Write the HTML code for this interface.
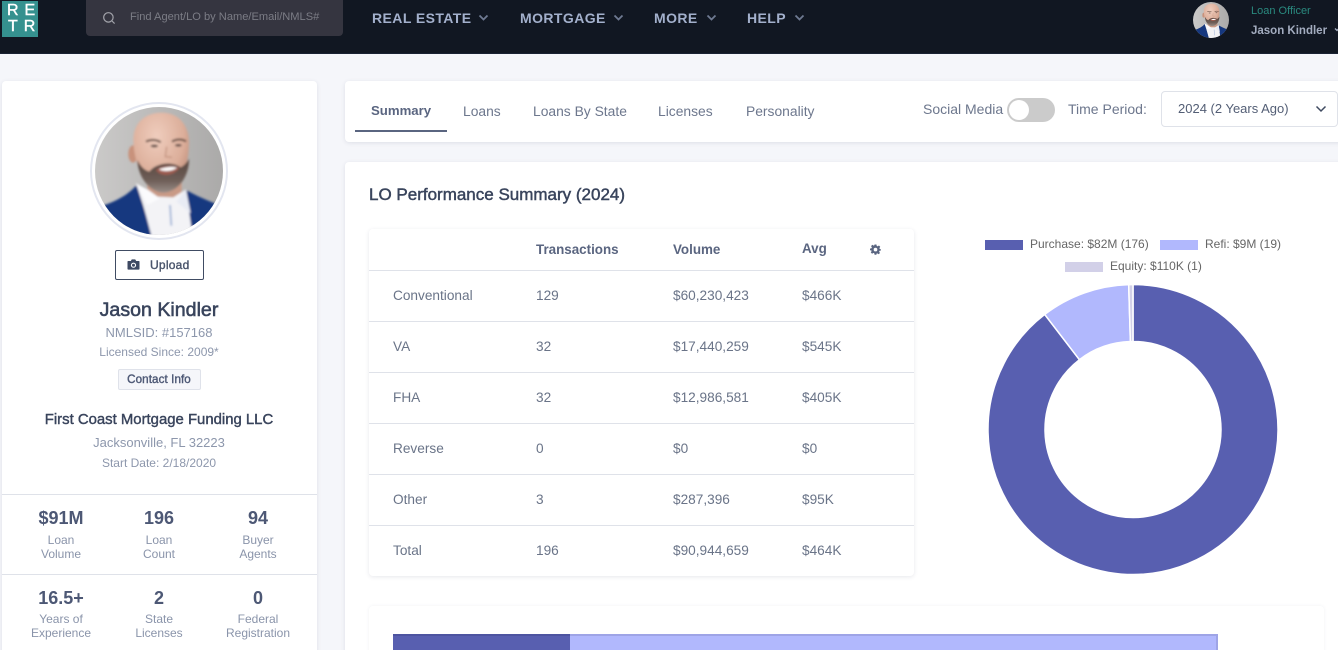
<!DOCTYPE html>
<html lang="en"><head><meta charset="utf-8"><title>Jason Kindler</title>
<style>
*{box-sizing:border-box;margin:0;padding:0}
html,body{width:1338px;height:650px;overflow:hidden;background:#f5f6fa}
body{position:relative;font-family:"Liberation Sans",Arial,sans-serif;color:#6b7791}
.a{position:absolute}
.t{position:absolute;white-space:nowrap;line-height:20px;font-size:14px}
.c{transform:translateX(-50%)}
.card{position:absolute;background:#fff;border-radius:4px;box-shadow:0 1px 4px rgba(70,80,110,.13)}
.nav{font-weight:bold;color:#a3b0cc;font-size:14px;letter-spacing:.42px}
.m{-webkit-text-stroke:.4px currentColor}
.hd{font-weight:bold;color:#5a6580;font-size:13.4px}
.cell{color:#6a7488;font-size:13.65px}
.ln{position:absolute;left:0;width:545px;height:1px;background:#dfe2e9}
.big{font-weight:bold;font-size:18px;color:#4d5875}
.sm{font-size:12px;color:#8a94aa;line-height:14px;text-align:center;white-space:nowrap;position:absolute;transform:translateX(-50%)}
.tab{color:#6d778d;font-size:13.85px}
.tb2{color:#6d778d;font-size:14px}
.leg{font-size:12px;color:#666}
</style></head><body>

<!-- top bar -->
<div class="a" style="left:0;top:0;width:1338px;height:54px;background:#111722;border-bottom:1px solid #1a2233"></div>
<div class="a" style="left:2px;top:1px;width:36px;height:36px;background:#35918f"></div>
<div class="t" style="left:7px;top:1px;color:#fff;font-size:16px;letter-spacing:6px;-webkit-text-stroke:.4px #fff">RE</div>
<div class="t" style="left:8px;top:17px;color:#fff;font-size:16px;letter-spacing:6px;-webkit-text-stroke:.4px #fff">TR</div>

<div class="a" style="left:86px;top:0;width:257px;height:36px;background:#353540;border-radius:0 0 4px 4px"></div>
<svg class="a" style="left:102px;top:11px" width="14" height="14" viewBox="0 0 14 14" fill="none" stroke="#a2a3aa" stroke-width="1.2"><circle cx="6.4" cy="6.4" r="4.7"/><path d="M10 10l2.6 2.6"/></svg>
<div class="t" style="left:130px;top:7px;font-size:11.1px;color:#7b7c85">Find Agent/LO by Name/Email/NMLS#</div>

<div class="t nav" style="left:372px;top:8px">REAL ESTATE</div>
<svg class="a" style="left:478px;top:14px" width="11" height="8" viewBox="0 0 11 8" fill="none" stroke="#6f7a92" stroke-width="1.8"><path d="M1.5 1.5l4 4 4-4"/></svg>
<div class="t nav" style="left:520px;top:8px">MORTGAGE</div>
<svg class="a" style="left:613px;top:14px" width="11" height="8" viewBox="0 0 11 8" fill="none" stroke="#6f7a92" stroke-width="1.8"><path d="M1.5 1.5l4 4 4-4"/></svg>
<div class="t nav" style="left:654px;top:8px">MORE</div>
<svg class="a" style="left:706px;top:14px" width="11" height="8" viewBox="0 0 11 8" fill="none" stroke="#6f7a92" stroke-width="1.8"><path d="M1.5 1.5l4 4 4-4"/></svg>
<div class="t nav" style="left:747px;top:8px">HELP</div>
<svg class="a" style="left:794px;top:14px" width="11" height="8" viewBox="0 0 11 8" fill="none" stroke="#6f7a92" stroke-width="1.8"><path d="M1.5 1.5l4 4 4-4"/></svg>

<svg width="0" height="0" style="position:absolute">
  <defs>
    <linearGradient id="bg" x1="0" x2="1" y1="0" y2="0"><stop offset="0" stop-color="#cbcac9"/><stop offset="1" stop-color="#aaa9a8"/></linearGradient>
    <radialGradient id="skin" cx=".42" cy=".3" r=".75"><stop offset="0" stop-color="#efcdbd"/><stop offset=".65" stop-color="#dcae9a"/><stop offset="1" stop-color="#b98773"/></radialGradient>
    <linearGradient id="beard" x1="0" x2="0" y1="0" y2="1"><stop offset="0" stop-color="#55433d"/><stop offset=".65" stop-color="#6f5f58"/><stop offset="1" stop-color="#9a8f89"/></linearGradient>
    <clipPath id="cp"><circle cx="297" cy="243" r="192"/></clipPath>
    <filter id="bl"><feGaussianBlur stdDeviation="3"/></filter>
  </defs>
  <symbol id="face" viewBox="105 51 384 384">
    <g clip-path="url(#cp)">
      <rect x="100" y="45" width="400" height="400" fill="url(#bg)"/>
      <g filter="url(#bl)">
        <path d="M262 270L262 330 365 330 365 270Z" fill="#c99a86"/>
        <path d="M120 350C165 335 205 315 230 285L280 445H110Z" fill="#17387f"/>
        <path d="M475 345C440 330 410 318 378 300L392 408 300 450H480Z" fill="#17387f"/>
        <path d="M228 280L250 345 275 440H395L393 405 378 298 340 322 290 320Z" fill="#f3f3f6"/>
        <path d="M228 280L262 345 300 325 265 300Z" fill="#fbfbfd"/>
        <path d="M378 298L392 370 350 335Z" fill="#e8ebf4"/>
        <path d="M330 345l4 62" stroke="#98aed4" stroke-width="5" fill="none"/>
        <ellipse cx="219" cy="192" rx="14" ry="26" fill="#c8927c"/>
        <path d="M220 150C220 95 260 68 305 68C355 68 388 105 387 160C386 225 365 290 312 305C265 305 222 235 220 150Z" fill="url(#skin)"/>
        <path d="M232 210C240 225 250 240 268 245C285 220 335 212 362 232C374 226 383 215 387 205C388 260 355 305 310 308C270 306 235 265 232 210Z" fill="url(#beard)"/>
        <path d="M288 240C302 262 342 258 358 234C340 224 305 226 288 240Z" fill="#9e5c50"/>
        <path d="M297 238C312 246 338 244 351 233C335 229 312 232 297 238Z" fill="#fff"/>
        <path d="M258 155C270 148 290 148 302 157M336 155C350 146 366 147 378 154" stroke="#5f463c" stroke-width="6" fill="none"/>
        <ellipse cx="283" cy="168" rx="11" ry="4" fill="#5d4a44"/>
        <ellipse cx="355" cy="166" rx="10" ry="4" fill="#5d4a44"/>
        <path d="M320 170L316 200 336 202" stroke="#c49480" stroke-width="4" fill="none"/>
      </g>
    </g>
  </symbol>
</svg>

<svg class="a" style="left:1193px;top:2px" width="36" height="36"><use href="#face" width="36" height="36"/></svg>
<div class="t" style="left:1251px;top:1px;font-size:11px;color:#2a8a7f">Loan Officer</div>
<div class="t" style="left:1251px;top:21px;font-size:11.5px;font-weight:bold;color:#a3acbf">Jason Kindler</div>
<svg class="a" style="left:1334px;top:27px" width="6" height="6" viewBox="0 0 6 6" fill="none" stroke="#a3acbf" stroke-width="1.3"><path d="M1 1.5l2 2 2-2"/></svg>

<!-- left card -->
<div class="card" style="left:2px;top:81px;width:315px;height:575px"></div>
<div class="a" style="left:90px;top:102px;width:138px;height:138px;border-radius:50%;border:2px solid #e3e6f0;background:#fff"></div>
<svg class="a" style="left:95px;top:107px" width="128" height="128"><use href="#face" width="128" height="128"/></svg>

<div class="a" style="left:115px;top:250px;width:89px;height:30px;border:1px solid #404c63;border-radius:2px;background:#fff"></div>
<svg class="a" style="left:127px;top:258px" width="13" height="13" viewBox="0 0 13 13"><path d="M1.2 3h2.6l1-1.6h3.4l1 1.6h2.6c.4 0 .7.3.7.7v7.2c0 .4-.3.7-.7.7H1.2c-.4 0-.7-.3-.7-.7V3.700c0-.4.3-.7.7-.7z" fill="#3e4a63"/><circle cx="6.500" cy="7.200" r="2.600" fill="#fff"/><circle cx="6.500" cy="7.200" r="1.500" fill="#3e4a63"/></svg>
<div class="t m" style="left:150px;top:255px;font-size:12px;color:#4a556c;letter-spacing:.25px">Upload</div>

<div class="t c m" style="left:159px;top:300px;font-size:19.6px;color:#39445c;-webkit-text-stroke:.55px #39445c">Jason Kindler</div>
<div class="t c" style="left:159px;top:323px;font-size:13px;color:#8d97ac">NMLSID: #157168</div>
<div class="t c" style="left:159px;top:342px;font-size:12px;color:#8d97ac">Licensed Since: 2009*</div>
<div class="a" style="left:118px;top:369px;width:83px;height:21px;background:#f5f6fa;border:1px solid #dfe2ea;border-radius:2px"></div>
<div class="t c m" style="left:159px;top:370px;font-size:11.6px;color:#4d5875;letter-spacing:.1px">Contact Info</div>
<div class="t c m" style="left:159px;top:410px;font-size:14.9px;color:#39445c">First Coast Mortgage Funding LLC</div>
<div class="t c" style="left:159px;top:433px;font-size:13px;color:#8d97ac">Jacksonville, FL 32223</div>
<div class="t c" style="left:159px;top:453px;font-size:12px;color:#8d97ac">Start Date: 2/18/2020</div>

<div class="a" style="left:2px;top:494px;width:315px;height:1px;background:#dfe2e9"></div>
<div class="a" style="left:2px;top:574px;width:315px;height:1px;background:#dfe2e9"></div>

<div class="t c big" style="left:61px;top:508px">$91M</div>
<div class="t c big" style="left:159px;top:508px">196</div>
<div class="t c big" style="left:258px;top:508px">94</div>
<div class="sm" style="left:61px;top:533px">Loan<br>Volume</div>
<div class="sm" style="left:159px;top:533px">Loan<br>Count</div>
<div class="sm" style="left:258px;top:533px">Buyer<br>Agents</div>

<div class="t c big" style="left:61px;top:588px">16.5+</div>
<div class="t c big" style="left:159px;top:588px">2</div>
<div class="t c big" style="left:258px;top:588px">0</div>
<div class="sm" style="left:61px;top:612px">Years of<br>Experience</div>
<div class="sm" style="left:159px;top:612px">State<br>Licenses</div>
<div class="sm" style="left:258px;top:612px">Federal<br>Registration</div>

<!-- tabs -->
<div class="card" style="left:345px;top:81px;width:1000px;height:61px"></div>
<div class="t" style="left:371px;top:101px;font-size:13.2px;font-weight:bold;color:#5a6580">Summary</div>
<div class="a" style="left:355px;top:130px;width:92px;height:2px;background:#5a6580"></div>
<div class="t tab" style="left:463px;top:101px">Loans</div>
<div class="t tab" style="left:533px;top:101px">Loans By State</div>
<div class="t tab" style="left:658px;top:101px">Licenses</div>
<div class="t tab" style="left:746px;top:101px">Personality</div>
<div class="t tb2" style="left:923px;top:99px">Social Media</div>
<div class="a" style="left:1007px;top:98px;width:48px;height:24px;border-radius:12px;background:#cbcbcb"></div>
<div class="a" style="left:1009px;top:100px;width:20px;height:20px;border-radius:50%;background:#fff"></div>
<div class="t tb2" style="left:1068px;top:99px">Time Period:</div>
<div class="a" style="left:1161px;top:91px;width:177px;height:36px;background:#fff;border:1px solid #dfe2e9;border-radius:4px"></div>
<div class="t" style="left:1178px;top:99px;font-size:13px;color:#535e75">2024 (2 Years Ago)</div>
<svg class="a" style="left:1315px;top:105px" width="12" height="8" viewBox="0 0 12 8" fill="none" stroke="#3f4a60" stroke-width="1.500"><path d="M1.500 1.500l4.500 4.500 4.500-4.500"/></svg>

<!-- main -->
<div class="card" style="left:345px;top:162px;width:1000px;height:500px"></div>
<div class="t m" style="left:369px;top:185px;font-size:17px;color:#39445c;-webkit-text-stroke:.45px #39445c">LO Performance Summary (2024)</div>

<!-- table -->
<div class="card" style="left:369px;top:229px;width:545px;height:347px">
  <div class="ln" style="top:41px"></div>
  <div class="ln" style="top:92px"></div>
  <div class="ln" style="top:143px"></div>
  <div class="ln" style="top:194px"></div>
  <div class="ln" style="top:245px"></div>
  <div class="ln" style="top:296px"></div>
</div>
<div class="t hd" style="left:536px;top:240px">Transactions</div>
<div class="t hd" style="left:673px;top:240px">Volume</div>
<div class="t hd" style="left:802px;top:239px">Avg</div>
<svg class="a" style="left:870px;top:244px" width="11" height="11" viewBox="0 0 24 24"><path fill="#5a6580" fill-rule="evenodd" d="M10 1h4l.7 3.200 2 .9L19.500 3.300l2.800 2.800-1.800 2.800.9 2.100L24 12v0l0 2-3.200.7-.9 2 1.800 2.800-2.800 2.800-2.800-1.800-2 .9L14 23.500h-4l-.7-3.200-2-.9-2.800 1.800-2.800-2.800 1.800-2.800-.9-2L0 14v-4l3.200-.7.900-2L2.300 4.500l2.800-2.800 2.800 1.800 1.400-.6zM12 8.200a4 4 0 100 8 4 4 0 000-8z"/></svg>

<div class="t cell" style="left:393px;top:286px">Conventional</div><div class="t cell" style="left:536px;top:286px">129</div><div class="t cell" style="left:673px;top:286px">$60,230,423</div><div class="t cell" style="left:802px;top:286px">$466K</div>
<div class="t cell" style="left:393px;top:337px">VA</div><div class="t cell" style="left:536px;top:337px">32</div><div class="t cell" style="left:673px;top:337px">$17,440,259</div><div class="t cell" style="left:802px;top:337px">$545K</div>
<div class="t cell" style="left:393px;top:388px">FHA</div><div class="t cell" style="left:536px;top:388px">32</div><div class="t cell" style="left:673px;top:388px">$12,986,581</div><div class="t cell" style="left:802px;top:388px">$405K</div>
<div class="t cell" style="left:393px;top:439px">Reverse</div><div class="t cell" style="left:536px;top:439px">0</div><div class="t cell" style="left:673px;top:439px">$0</div><div class="t cell" style="left:802px;top:439px">$0</div>
<div class="t cell" style="left:393px;top:490px">Other</div><div class="t cell" style="left:536px;top:490px">3</div><div class="t cell" style="left:673px;top:490px">$287,396</div><div class="t cell" style="left:802px;top:490px">$95K</div>
<div class="t cell" style="left:393px;top:541px">Total</div><div class="t cell" style="left:536px;top:541px">196</div><div class="t cell" style="left:673px;top:541px">$90,944,659</div><div class="t cell" style="left:802px;top:541px">$464K</div>

<!-- legend -->
<div class="a" style="left:985px;top:240px;width:38px;height:10px;background:#585fb0"></div>
<div class="t leg" style="left:1030px;top:234px">Purchase: $82M (176)</div>
<div class="a" style="left:1160px;top:240px;width:38px;height:10px;background:#b1b8fd"></div>
<div class="t leg" style="left:1205px;top:234px">Refi: $9M (19)</div>
<div class="a" style="left:1065px;top:262px;width:38px;height:10px;background:#d2d0e8"></div>
<div class="t leg" style="left:1110px;top:256px">Equity: $110K (1)</div>

<!-- donut -->
<svg class="a" style="left:982.500px;top:280px" width="300" height="300" viewBox="-150 -149.500 300 300">
  <g stroke="#fff" stroke-width="1.500">
  <path fill="#585fb0" d="M0 -145A145 145 0 1 1 -88.270 -115.040L-53.570 -69.820A88 88 0 1 0 0 -88Z"/>
  <path fill="#b1b8fd" d="M-88.270 -115.040A145 145 0 0 1 -4.300 -144.900L-2.600 -87.960A88 88 0 0 0 -53.570 -69.820Z"/>
  <path fill="#d2d0e8" d="M-4.300 -144.900A145 145 0 0 1 0 -145L0 -88A88 88 0 0 0 -2.600 -87.960Z"/>
  </g>
</svg>

<!-- bottom card -->
<div class="card" style="left:369px;top:606px;width:955px;height:60px;box-shadow:0 0 3px rgba(70,80,110,.08)"></div>
<div class="a" style="left:393px;top:634px;width:177px;height:20px;background:#585fb0;border-top:2px solid #4d54a0"></div>
<div class="a" style="left:570px;top:634px;width:648px;height:20px;background:#b1b8fd;border-top:2px solid #9ea4e6;border-right:2px solid #9ea4e6"></div>
</body></html>
